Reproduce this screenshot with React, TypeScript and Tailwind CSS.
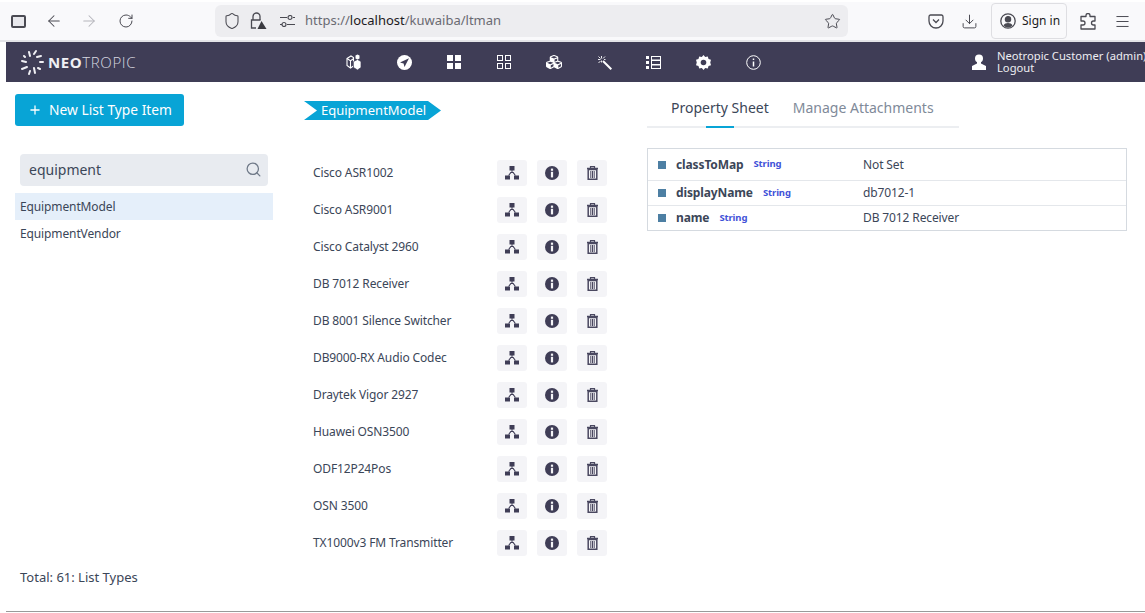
import { ArrowLeft, ArrowRight, Download, Menu, Plus, RotateCw, Search, Shield, Star } from "lucide-react";
import { FaCubes } from "react-icons/fa";

const models = [
	"Cisco ASR1002",
	"Cisco ASR9001",
	"Cisco Catalyst 2960",
	"DB 7012 Receiver",
	"DB 8001 Silence Switcher",
	"DB9000-RX Audio Codec",
	"Draytek Vigor 2927",
	"Huawei OSN3500",
	"ODF12P24Pos",
	"OSN 3500",
	"TX1000v3 FM Transmitter",
];

const props = [
	{ name: "classToMap", value: "Not Set", h: "h-[31px]" },
	{ name: "displayName", value: "db7012-1", h: "h-[25px]" },
	{ name: "name", value: "DB 7012 Receiver", h: "h-[25px]" },
];

const SitemapIcon = () => (
	<svg width="14" height="14" viewBox="0 0 14 14" fill="#3f3d56">
		<rect x="4.5" y="0" width="5" height="4.5" />
		<path d="M6.5 4h1v2.5h-1z" />
		<path d="M3 9.5L5.5 6h3L11 9.500H9.800L7.800 7h-1.600L4.200 9.500z" />
		<rect x="0" y="9.5" width="5" height="4" />
		<rect x="9" y="9.5" width="5" height="4" />
	</svg>
);

const InfoIcon = () => (
	<svg width="14" height="14" viewBox="0 0 14 14">
		<circle cx="7" cy="7" r="7" fill="#3f3d56" />
		<rect x="5.9" y="2.6" width="2.2" height="2.2" fill="#f4f4f7" />
		<rect x="5.9" y="5.8" width="2.2" height="5.6" fill="#f4f4f7" />
	</svg>
);

const TrashIcon = () => (
	<svg width="11" height="14" viewBox="0 0 11 14" fill="none" stroke="#4a4860">
		<path d="M0 2.5h11" strokeWidth="1.5" />
		<path d="M3.5 2V.7h4V2" strokeWidth="1.2" />
		<path d="M1.2 3.5h8.600V13.300H1.200z" strokeWidth="1.5" />
		<path d="M3.800 5v7M5.500 5v7M7.200 5v7" strokeWidth="1" />
	</svg>
);

const Logo = () => (
	<svg width="25" height="26" viewBox="0 0 25 26" stroke="#f0f0f4" strokeWidth="2" strokeLinecap="round">
		<path d="M9 3l1 4M16 2l-2 3M21 7l-4 1M23 13h-3M20 20l-2-1M15 24l-1-5M9 25l1-3M2 20l5-2M2 12l4 1M4 7l1 1" />
	</svg>
);

const NavIcon = ({ children }: { children: React.ReactNode }) => (
	<div className="w-[50px] shrink-0 flex items-center justify-center">{children}</div>
);

export default function App() {
	return (
		<div className="w-[1145px] h-[613px] overflow-hidden bg-white text-[#3b4658] font-['Noto_Sans',sans-serif]">
			{/* browser bar */}
			<div className="h-[42px] border-t-2 border-b-2 border-t-white border-b-[#e4e4e8] bg-[#f9f9fb] flex items-center text-[#4a4a52]">
				<div className="w-[15px] h-[13px] ml-[11px] border-2 border-[#4a4a52] rounded-[2px] bg-[#e8e8ec] shrink-0" />
				<ArrowLeft className="ml-[19px] shrink-0" size={18} strokeWidth={1.4} />
				<ArrowRight className="ml-[17px] text-[#b5b5bb] shrink-0" size={18} strokeWidth={1.4} />
				<RotateCw className="ml-[20px] shrink-0" size={16} strokeWidth={1.5} />
				<div className="ml-[81px] w-[633px] h-[32px] shrink-0 rounded-md bg-[#ededf0] flex items-center pl-[8px] pr-[7px]">
					<Shield size={18} strokeWidth={1.4} />
					<svg className="ml-[9px]" width="17" height="18" viewBox="0 0 17 18" fill="none" stroke="#4a4a52" strokeWidth="1.3">
						<path d="M3 8V4.500a3.500 3.500 0 0 1 7 0V8" />
						<path d="M6 16H1.500V8h9" />
						<path d="M11.500 9l5 8h-9z" fill="#3a3a40" stroke="none" />
					</svg>
					<svg className="ml-[13px]" width="15" height="12" viewBox="0 0 15 12" fill="none" stroke="#4a4a52" strokeWidth="1.2">
						<path d="M0 2.500h7M0 9.500h2M7 9.500h8M13 2.500h2" />
						<circle cx="10" cy="2.500" r="2" />
						<circle cx="4" cy="9.500" r="2" />
					</svg>
					<span className="ml-[10px] text-[13px] text-[#6a6a72]">
						https://<span className="text-[#1c1b22]">localhost</span>/kuwaiba/ltman
					</span>
					<Star className="ml-auto" size={17} strokeWidth={1.4} />
				</div>
				<svg className="ml-[80px] shrink-0" width="16" height="15" viewBox="0 0 16 15" fill="none" stroke="#4a4a52" strokeWidth="1.3">
					<path d="M2.500 1h11A1.800 1.800 0 0 1 15 2.800V7A7 7 0 0 1 1 7V2.800A1.800 1.800 0 0 1 2.500 1z" />
					<path d="M5 5.500l3 3 3-3" />
				</svg>
				<Download className="ml-[17px] shrink-0" size={17} strokeWidth={1.4} />
				<div className="ml-[13px] w-[76px] h-[36px] shrink-0 border border-[#dedee2] rounded-[4px] flex items-center pl-[8px] gap-[6px] text-[12px] text-[#1c1b22]">
					<svg width="16" height="16" viewBox="0 0 16 16" fill="none" stroke="#4a4a52" strokeWidth="1.3">
						<circle cx="8" cy="8" r="7.200" />
						<circle cx="8" cy="6.200" r="2.600" fill="#4a4a52" />
						<path d="M3.500 12.500c1-2 2.500-2.600 4.500-2.600s3.500.6 4.500 2.600A6 6 0 0 1 3.500 12.500z" fill="#4a4a52" stroke="none" />
					</svg>
					Sign in
				</div>
				<svg className="ml-[13px] shrink-0" width="16" height="17" viewBox="0 0 16 17" fill="none" stroke="#4a4a52" strokeWidth="1.3" strokeLinejoin="round">
					<path d="M6 3.500V2.500a2 2 0 0 1 4 0v1h5v4.500h-1.500a2 2 0 0 0 0 4H15V16H1v-4h2a2 2 0 0 0 0-4H1V3.500z" />
				</svg>
				<Menu className="ml-[18px] shrink-0" size={17} strokeWidth={1.4} />
			</div>

			<div className="ml-[6px] h-[570px] border-b border-[#9a9a9a] flex flex-col">
				{/* app nav */}
				<div className="h-[40px] shrink-0 bg-[#3f3d56] flex items-center text-white overflow-hidden">
					<div className="ml-[14px] flex items-center gap-[3px] w-[309px] shrink-0">
						<Logo />
						<span className="text-[15px] tracking-[0.6px] text-[#f0f0f4] font-['Open_Sans',sans-serif]">
							<span className="font-bold">NEO</span>
							<span className="font-light text-[#d8d8e0]">TROPIC</span>
						</span>
					</div>
					<NavIcon>
						<svg width="16" height="16" viewBox="0 0 16 16" fill="none" stroke="white" strokeWidth="1.1">
							<path d="M1 4.500l4-2.500 2.500 1.500V12L4.500 14 1 11.500z" />
							<path d="M1 4.500l3.500 2.200V14M4.500 6.700l3-2" />
							<path d="M7.500 7.500l4-2 3.500 2v6L11.500 16l-4-2.500z" fill="white" stroke="#3f3d56" strokeWidth=".7" />
							<path d="M9.500 1.500l2-1 2 1v3l-2 1-2-1z" fill="white" stroke="none" />
						</svg>
					</NavIcon>
					<NavIcon>
						<svg width="15" height="15" viewBox="0 0 15 15">
							<circle cx="7.500" cy="7.500" r="7.500" fill="white" />
							<path d="M12 3.200L3 7.500l3.600.9.900 3.600z" fill="#3f3d56" />
						</svg>
					</NavIcon>
					<NavIcon>
						<svg width="14" height="14" viewBox="0 0 14 14" fill="white">
							<rect width="6" height="6" />
							<rect x="8" width="6" height="6" />
							<rect y="8" width="6" height="6" />
							<rect x="8" y="8" width="6" height="6" />
						</svg>
					</NavIcon>
					<NavIcon>
						<svg width="14" height="14" viewBox="0 0 14 14" fill="none" stroke="white">
							<rect x=".5" y=".5" width="5" height="5" />
							<rect x="8.500" y=".5" width="5" height="5" />
							<rect x=".5" y="8.500" width="5" height="5" />
							<rect x="8.500" y="8.500" width="5" height="5" />
						</svg>
					</NavIcon>
					<NavIcon>
						<FaCubes size={16} />
					</NavIcon>
					<NavIcon>
						<svg width="15" height="15" viewBox="0 0 15 15" stroke="white" fill="none">
							<path d="M6 6l8.300 8.300" strokeWidth="2" />
							<path d="M1 4.500h2.500M4.500 1v2.500M1.500 1.500l2 2M1.500 8l2-2M8 1.500l-2 2M7 4.500h1.500M4.500 5.500v2" strokeWidth=".9" />
						</svg>
					</NavIcon>
					<div className="w-[49px] shrink-0 flex items-center justify-center">
						<svg width="15" height="13" viewBox="0 0 15 13" fill="white">
							<rect width="3" height="3" />
							<rect y="5" width="3" height="3" />
							<rect y="10" width="3" height="3" />
							<path d="M5 0h10v13H5zM6 1v2.500h8V1zM6 5v3h8V5zM6 9.500V12h8V9.500z" fillRule="evenodd" />
						</svg>
					</div>
					<NavIcon>
						<svg width="15" height="15" viewBox="0 0 14 14">
							<path d="M7 0l1.600 1.800 2.400-.5.700 2.400 2.300.800-.7 2.500.7 2.500-2.300.800-.7 2.400-2.400-.5L7 14l-1.600-1.800-2.400.5-.7-2.400L0 9.500.7 7 0 4.500l2.300-.8.700-2.400 2.400.5z" fill="white" />
							<circle cx="7" cy="7" r="2.600" fill="#3f3d56" />
						</svg>
					</NavIcon>
					<NavIcon>
						<svg width="15" height="15" viewBox="0 0 15 15" fill="none" stroke="white">
							<circle cx="7.500" cy="7.500" r="6.800" />
							<path d="M7.500 6.500v5" strokeWidth="1.500" />
							<path d="M7.500 3.500v1.500" strokeWidth="1.500" />
						</svg>
					</NavIcon>
					<svg className="ml-[194px] shrink-0" width="14" height="16" viewBox="0 0 14 16" fill="white">
						<circle cx="7" cy="4.500" r="4" />
						<path d="M5 7.500h4v2l5 2.500v4H0v-4l5-2.500z" />
					</svg>
					<div className="ml-[11px] shrink-0 text-[11.2px] leading-[12px] whitespace-nowrap text-[#eeeef2]">
						<div>Neotropic Customer (admin)</div>
						<div>Logout</div>
					</div>
				</div>

				<div className="flex flex-1 min-h-0">
					{/* list types */}
					<div className="w-[267px] shrink-0 ml-[9px] flex flex-col pt-[12px]">
						<button className="w-[169px] h-[32px] rounded-[3px] bg-[#08a4d6] text-white text-[13.8px] flex items-center pl-[13px] gap-[7px]">
							<Plus size={14} strokeWidth={2.2} />
							New List Type Item
						</button>
						<div className="mt-[28px] ml-[5px] w-[248px] h-[32px] rounded-[4px] bg-[#e8ebf0] flex items-center justify-between pl-[9px] pr-[6px] pb-[1px] text-[14px]">
							equipment
							<Search size={17} strokeWidth={1.8} className="text-[#6f7988]" />
						</div>
						<div className="mt-[7px] w-[258px] h-[27px] bg-[#e5effa] flex items-center pl-[5px] text-[12px] tracking-[-0.12px]">EquipmentModel</div>
						<div className="h-[27px] flex items-center pl-[5px] text-[12px] tracking-[-0.12px]">EquipmentVendor</div>
						<div className="mt-auto mb-[24px] ml-[5px] text-[13px]">Total: 61: List Types</div>
					</div>

					{/* items */}
					<div className="w-[343px] shrink-0 ml-[22px] pt-[19px]">
						<div className="w-[137px] h-[19px] bg-[#08a4d6] text-white text-[13px] leading-[19px] pl-[17px] [clip-path:polygon(0_0,124px_0,137px_50%,124px_100%,0_100%,13px_50%)]">
							EquipmentModel
						</div>
						<div className="mt-[40px] flex flex-col gap-[11px]">
							{models.map((model) => (
								<div className="flex items-center h-[26px] pl-[9px]" key={model}>
									<span className="w-[184px] text-[12px] tracking-[-0.12px] whitespace-nowrap">{model}</span>
									<div className="flex gap-[10px]">
										<div className="w-[30px] h-[26px] rounded-[3px] bg-[#f4f4f7] flex items-center justify-center">
											<SitemapIcon />
										</div>
										<div className="w-[30px] h-[26px] rounded-[3px] bg-[#f4f4f7] flex items-center justify-center">
											<InfoIcon />
										</div>
										<div className="w-[30px] h-[26px] rounded-[3px] bg-[#f4f4f7] flex items-center justify-center">
											<TrashIcon />
										</div>
									</div>
								</div>
							))}
						</div>
					</div>

					{/* properties */}
					<div className="w-[480px] shrink-0">
						<div className="w-[312px] h-[46px] border-b-2 border-[#eceef1] flex relative text-[14px] pt-[15px]">
							<span className="ml-[24px]">Property Sheet</span>
							<span className="ml-[24px] text-[#808a99]">Manage Attachments</span>
							<div className="absolute left-[59px] -bottom-[2px] w-[28px] h-[2px] bg-[#08a4d6]" />
						</div>
						<div className="mt-[20px] border border-[#d5dae0] text-[12px] tracking-[-0.12px]">
							{props.map((p, i) => (
								<div className={`${p.h} flex items-center ${i > 0 ? "border-t border-[#e4e7eb]" : ""}`} key={p.name}>
									<div className="w-[8px] h-[8px] bg-[#4d7fa3] ml-[10px] shrink-0" />
									<div className="w-[187px] ml-[10px] flex items-center gap-[10px] shrink-0">
										<span className="font-bold">{p.name}</span>
										<span className="text-[9.5px] font-bold text-[#3f51d8]">String</span>
									</div>
									<span>{p.value}</span>
								</div>
							))}
						</div>
					</div>
				</div>
			</div>
		</div>
	);
}
